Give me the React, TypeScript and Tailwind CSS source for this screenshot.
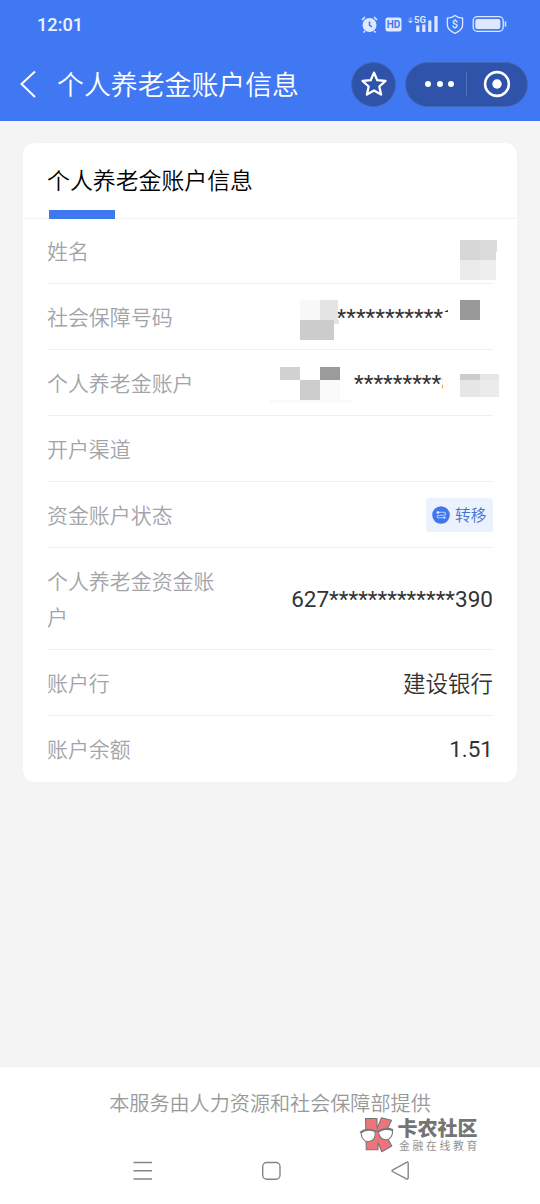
import type { ReactNode } from 'react';

const latin = 'font-[Roboto,"Noto_Sans_CJK_SC",sans-serif]';

function StatusIcons() {
  return (
    <svg width="150" height="24" viewBox="0 0 150 24" className="text-[#dfe8ff]" fill="none" stroke="currentColor">
      {/* alarm clock */}
      <circle cx="9.500" cy="13" r="7" fill="currentColor" stroke="none" />
      <path d="M2 8 5 5M17 8l-3-3M5 19l-1.500 1.500M14 19l1.500 1.500" strokeWidth="1.600" />
      <path d="M9.500 9.500V13l2.500 2" stroke="#4078f3" strokeWidth="1.600" />
      {/* HD */}
      <rect x="25.500" y="5.500" width="16" height="14" rx="2.500" fill="currentColor" stroke="none" />
      <text x="33.500" y="16" textAnchor="middle" fill="#4078f3" stroke="none" className="font-[Roboto] text-[10px] font-bold">HD</text>
      {/* signal */}
      <path d="m48 7.500 2.500-2.500 2.500 2.500z" fill="currentColor" stroke="none" opacity=".4" />
      <path d="m48 8.700 2.500 2.600L53 8.700z" fill="currentColor" stroke="none" />
      <text x="54" y="11" fill="currentColor" stroke="none" className="font-[Roboto] text-[9.500px] font-bold">5G</text>
      <path d="M57.800 13.500v6.500M63.800 12.500v7.500M69.800 8.500V20M76 4v16" strokeWidth="3.200" />
      {/* shield */}
      <path d="M95 3.500c2.500 2 5 2.500 7.600 2.700V13c0 4-3.500 6.500-7.600 8.300-4.100-1.800-7.600-4.300-7.600-8.300V6.200C90 6 92.500 5.500 95 3.500Z" strokeWidth="1.300" />
      <text x="95" y="16" textAnchor="middle" fill="currentColor" stroke="none" className="font-[Roboto] text-[11px] font-medium">$</text>
      {/* battery */}
      <rect x="113.200" y="4.700" width="30" height="14.600" rx="4" strokeWidth="1.300" />
      <rect x="115.300" y="7" width="25" height="10" rx="2" fill="currentColor" stroke="none" />
      <path d="M145.500 9.500v5" strokeWidth="1.500" />
    </svg>
  );
}

function Header() {
  return (
    <header className="h-[121px] bg-[#4078f3] text-white">
      <div className="flex h-12 items-center justify-between pl-[37px] pr-[30px]">
        <span className="pt-[2px] font-[Roboto,sans-serif] text-[18.200px] font-medium text-[#edf3ff]">12:01</span>
        <StatusIcons />
      </div>
      <div className="flex h-[72px] items-center pl-[18px] pr-[12px]">
        <svg width="20" height="30" viewBox="0 0 20 30" fill="none" stroke="currentColor" strokeWidth="2">
          <path d="M17 2.500 3.500 15 17 28" />
        </svg>
        <h1 className="ml-[19px] flex-1 whitespace-nowrap pt-[3px] text-[26.900px] font-[350] leading-[36px]">个人养老金账户信息</h1>
        <div className="flex size-[45px] items-center justify-center rounded-full border border-[#4068bc] bg-[#2e53a8]">
          <svg width="28" height="28" viewBox="0 0 28 28" fill="none" stroke="currentColor" strokeWidth="2.300" strokeLinejoin="round">
            <path d="m14 2.600 3.300 7.600 8.200.8-6.200 5.500 1.800 8.100-7.100-4.200-7.100 4.200 1.800-8.100L2.500 11l8.200-.8Z" />
          </svg>
        </div>
        <div className="ml-[9px] flex h-[45px] w-[123px] items-center rounded-full border border-[#4068bc] bg-[#2e53a8]">
          <div className="flex flex-1 items-center gap-[5.500px] pl-[19px]">
            <i className="size-[6px] rounded-full bg-white" />
            <i className="size-[6px] rounded-full bg-white" />
            <i className="size-[6px] rounded-full bg-white" />
          </div>
          <i className="h-6 w-px bg-[#5474b8]" />
          <div className="flex w-[60px] justify-center">
            <svg width="28" height="28" viewBox="0 0 28 28" fill="none">
              <circle cx="14" cy="14" r="11.900" stroke="currentColor" strokeWidth="2.600" />
              <circle cx="14" cy="14" r="4.700" fill="currentColor" />
            </svg>
          </div>
        </div>
      </div>
    </header>
  );
}

function Row({ label, children, size = 'h-[66px]', last = false }: { label: string; children?: ReactNode; size?: string; last?: boolean }) {
  return (
    <div className={`relative mx-6 flex items-center justify-between ${size} ${last ? '' : 'border-b border-[#f0f0f1]'}`}>
      <span className="w-[172px] pt-[2px] text-[20.950px] font-[350] leading-[36px] text-[#a2a4a9]">{label}</span>
      {children}
    </div>
  );
}

function NameMask() {
  return (
    <>
      <i className="absolute left-[413px] top-[21px] size-5 bg-[#d7d7d7]" />
      <i className="absolute left-[433px] top-[21px] h-5 w-4 bg-[#dbdbdb]" />
      <i className="absolute left-[449px] top-[21px] h-3 w-px bg-[#dddddd]" />
      <i className="absolute left-[413px] top-[41px] size-5 bg-[#ebebeb]" />
      <i className="absolute left-[433px] top-[41px] h-5 w-4 bg-[#eeeeee]" />
    </>
  );
}

function IdMask() {
  return (
    <>
      <span className="absolute left-[289.500px] top-[18px] whitespace-nowrap text-[22.500px] leading-[30px] text-[#333]">***********1</span>
      <i className="absolute left-[396px] top-[28px] h-4 w-4 bg-white" />
      <i className="absolute left-[401px] top-[20px] h-4 w-4 bg-white" />
      <i className="absolute left-[253px] top-[16px] size-5 bg-[#f8f8f8]" />
      <i className="absolute left-[273px] top-[16px] h-5 w-[18px] bg-[#e4e4e4]" />
      <i className="absolute left-[287px] top-[36px] h-1 w-[5px] bg-[#e4e4e4]" />
      <i className="absolute left-[253px] top-[36px] h-5 w-[34px] bg-[#cccccc]" />
      <i className="absolute left-[413px] top-[16px] size-5 bg-[#999999]" />
    </>
  );
}

function AccountMask() {
  return (
    <>
      <span className="absolute left-[307px] top-[18px] whitespace-nowrap text-[22.500px] leading-[30px] text-[#333]">*********8</span>
      <i className="absolute left-[396px] top-[20px] h-7 w-[17px] bg-white" />
      <i className="absolute left-[233px] top-[17px] h-[13px] w-5 bg-[#d1d1d1]" />
      <i className="absolute left-[273px] top-[17px] h-[13px] w-5 bg-[#9b9b9b]" />
      <i className="absolute left-[253px] top-[30px] size-5 bg-[#cdcdcd]" />
      <i className="absolute left-[273px] top-[30px] size-5 bg-[#fafafa]" />
      <i className="absolute left-[223px] top-[50px] h-[3px] w-[83px] bg-[#f9fafa]" />
      <i className="absolute left-[413px] top-[24px] h-[6px] w-5 bg-[#cccccc]" />
      <i className="absolute left-[433px] top-[24px] h-[6px] w-[19px] bg-[#e6e6e6]" />
      <i className="absolute left-[413px] top-[30px] h-[17px] w-5 bg-[#e6e6e6]" />
      <i className="absolute left-[433px] top-[30px] h-[17px] w-[19px] bg-[#ebebeb]" />
    </>
  );
}

function TransferButton() {
  return (
    <button className="mt-px flex h-[34px] w-[67px] items-center rounded-[3px] bg-[#ebf2fe] pl-[6px] text-[#4474d0]">
      <svg width="18" height="18" viewBox="0 0 18 18" fill="none">
        <circle cx="9" cy="9" r="8.800" fill="#4078ec" />
        <path d="M5.500 6.200H12a1.500 1.500 0 0 1 0 3H6.500a1.300 1.300 0 0 0 0 2.600H12.500" stroke="#b4ccff" strokeWidth="1.100" />
        <circle cx="5.900" cy="6.500" r="1.300" fill="#e5eeff" />
        <circle cx="12.500" cy="11.600" r="1.100" fill="#dce8ff" />
      </svg>
      <span className="ml-[5px] whitespace-nowrap pt-[2px] text-[15.800px] font-[350]">转移</span>
    </button>
  );
}

function Watermark() {
  return (
    <div className="absolute left-[359px] top-[50px] flex">
      <svg width="37" height="37" viewBox="0 0 37 37" stroke="#777" strokeWidth="1.100" strokeLinejoin="round">
        <path d="M6.500 1.500H18v10.200L22.500.8l10 2.400-6.300 13.500 6.600 12.300-10 5.700L19 25.500v7.300H7.300Z" fill="#ee747b" />
        <path d="M2 16c4-3.500 10-3.700 14-1.500 1.200 5.500-1.500 9.500-6 10S2.500 21.500 2 16Z" fill="#fff" />
        <path d="M19.500 15c3-2.700 9.500-3.500 14-1.500.5 4.700-2 8.700-6 9.200-4.300.5-7.500-2.500-8-7.700Z" fill="#fff" />
        <path d="M1 15.500c4-3.500 10-3.700 14.700-1.500l3.800.3c4-2.500 10-3.300 14.500-1.300" fill="none" strokeWidth="1.600" />
      </svg>
      <div className="-ml-[1px] whitespace-nowrap">
        <div className="text-[20px] font-black leading-[24px] text-[#747474]">卡农社区</div>
        <div className="ml-[4px] text-left text-[10.800px] leading-[11px] tracking-[2.700px] text-[#929292]">金融在线教育</div>
      </div>
    </div>
  );
}

export default function App() {
  return (
    <div className={`flex h-[1204px] w-[540px] flex-col overflow-hidden bg-[#f4f4f4] ${latin}`}>
      <Header />
      <main className="flex-1 px-[23px] pt-[22px]">
        <section className="rounded-[12px] bg-white">
          <div className="flex h-[76px] flex-col justify-between border-b border-[#f1f2f4] pl-6">
            <h2 className="pt-[21px] text-[22.900px] font-[350] leading-[36px] text-black">个人养老金账户信息</h2>
            <i className="-mb-px ml-[2px] h-[9px] w-[66px] bg-[#4078f0]" />
          </div>
          <Row label="姓名" size="h-[65px]"><NameMask /></Row>
          <Row label="社会保障号码"><IdMask /></Row>
          <Row label="个人养老金账户"><AccountMask /></Row>
          <Row label="开户渠道" />
          <Row label="资金账户状态"><TransferButton /></Row>
          <Row label="个人养老金资金账户" size="h-[102px]">
            <span className="pt-[2px] text-[22.500px] text-[#333]">627*************390</span>
          </Row>
          <Row label="账户行"><span className="pt-[4px] text-[22.500px] font-[350] text-[#333]">建设银行</span></Row>
          <Row label="账户余额" last><span className="pt-[2px] text-[22.500px] text-[#333]">1.51</span></Row>
        </section>
      </main>
      <footer className="relative h-[137px] bg-white pt-[22px] text-center">
        <p className="text-[20.100px] font-[350] leading-[30px] text-[#999]">本服务由人力资源和社会保障部提供</p>
        <Watermark />
        <svg className="mt-[38px]" width="540" height="30" viewBox="0 0 540 30" fill="none" stroke="#858585" strokeWidth="1.400">
          <path d="M133.500 5.500h18.500M133.500 13.800h18.500M133.500 22h18.500" />
          <rect x="262.700" y="5.500" width="17.300" height="16.800" rx="4" />
          <path d="M392.500 13.200 406.500 5.300q1.700-.8 1.700 1v14.500q0 1.800-1.700 1L392.500 14.500q-1-.7 0-1.300Z" />
        </svg>
      </footer>
    </div>
  );
}
